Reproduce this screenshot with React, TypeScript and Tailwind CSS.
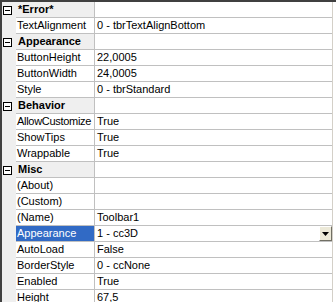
import React from "react";

type Row =
  | { kind: "cat"; label: string }
  | { kind: "prop"; name: string; value: string; selected?: boolean; tight?: boolean };

const rows: Row[] = [
  { kind: "cat", label: "*Error*" },
  { kind: "prop", name: "TextAlignment", value: "0 - tbrTextAlignBottom" },
  { kind: "cat", label: "Appearance" },
  { kind: "prop", name: "ButtonHeight", value: "22,0005" },
  { kind: "prop", name: "ButtonWidth", value: "24,0005" },
  { kind: "prop", name: "Style", value: "0 - tbrStandard" },
  { kind: "cat", label: "Behavior" },
  { kind: "prop", name: "AllowCustomize", value: "True", tight: true },
  { kind: "prop", name: "ShowTips", value: "True" },
  { kind: "prop", name: "Wrappable", value: "True" },
  { kind: "cat", label: "Misc" },
  { kind: "prop", name: "(About)", value: "" },
  { kind: "prop", name: "(Custom)", value: "" },
  { kind: "prop", name: "(Name)", value: "Toolbar1" },
  { kind: "prop", name: "Appearance", value: "1 - cc3D", selected: true },
  { kind: "prop", name: "AutoLoad", value: "False" },
  { kind: "prop", name: "BorderStyle", value: "0 - ccNone" },
  { kind: "prop", name: "Enabled", value: "True" },
  { kind: "prop", name: "Height", value: "67,5" },
];

function MinusBox() {
  return (
    <div className="w-[9px] h-[9px] border border-[#000000] bg-white flex items-center justify-center">
      <div className="w-[5px] h-px bg-black" />
    </div>
  );
}

function DropButton() {
  return (
    <div className="w-[13px] h-[15px] bg-[#ece9d8] border-t border-l border-t-[#ffffff] border-l-[#ffffff] border-r border-b border-r-[#716f64] border-b-[#716f64] flex items-center justify-center">
      <svg width="7" height="4" viewBox="0 0 7 4">
        <path d="M0 0h7L3.5 4z" fill="#000" />
      </svg>
    </div>
  );
}

export default function App() {
  return (
    <div
      className="w-[336px] h-[302px] overflow-hidden bg-white border-t-2 border-l-2 border-t-[#404040] border-l-[#404040] text-[11px] leading-none text-black flex"
      style={{ fontFamily: '"Liberation Sans", Arial, sans-serif' }}
    >
      <div className="flex flex-col w-[331px] shrink-0 border-r border-[#d4d0c8]">
        {rows.map((r, i) =>
          r.kind === "cat" ? (
            <div key={i} className="flex h-[16px] shrink-0">
              <div className="w-[14px] bg-[#efefef] flex items-center pl-px">
                <MinusBox />
              </div>
              <div className="w-[79px] bg-[#efefef] border-b border-r border-[#c0c0c0] flex items-center pl-[2px] font-bold">
                {r.label}
              </div>
              <div className="flex-1 border-b border-[#c0c0c0] bg-white" />
            </div>
          ) : (
            <div key={i} className="flex h-[16px] shrink-0">
              <div className="w-[14px] bg-[#efefef]" />
              <div
                className={
                  (r.selected
                    ? "bg-[#316ac5] text-white "
                    : "") +
                  (r.tight ? "tracking-[-0.3px] " : "") +
                  "w-[79px] border-b border-r border-[#c0c0c0] flex items-center pl-px whitespace-nowrap overflow-hidden"
                }
              >
                {r.name}
              </div>
              <div className="flex-1 border-b border-[#c0c0c0] flex items-center justify-between pl-[2px] whitespace-nowrap">
                <span>{r.value}</span>
                {r.selected && <DropButton />}
              </div>
            </div>
          )
        )}
      </div>
      <div className="flex-1 bg-white" />
    </div>
  );
}
